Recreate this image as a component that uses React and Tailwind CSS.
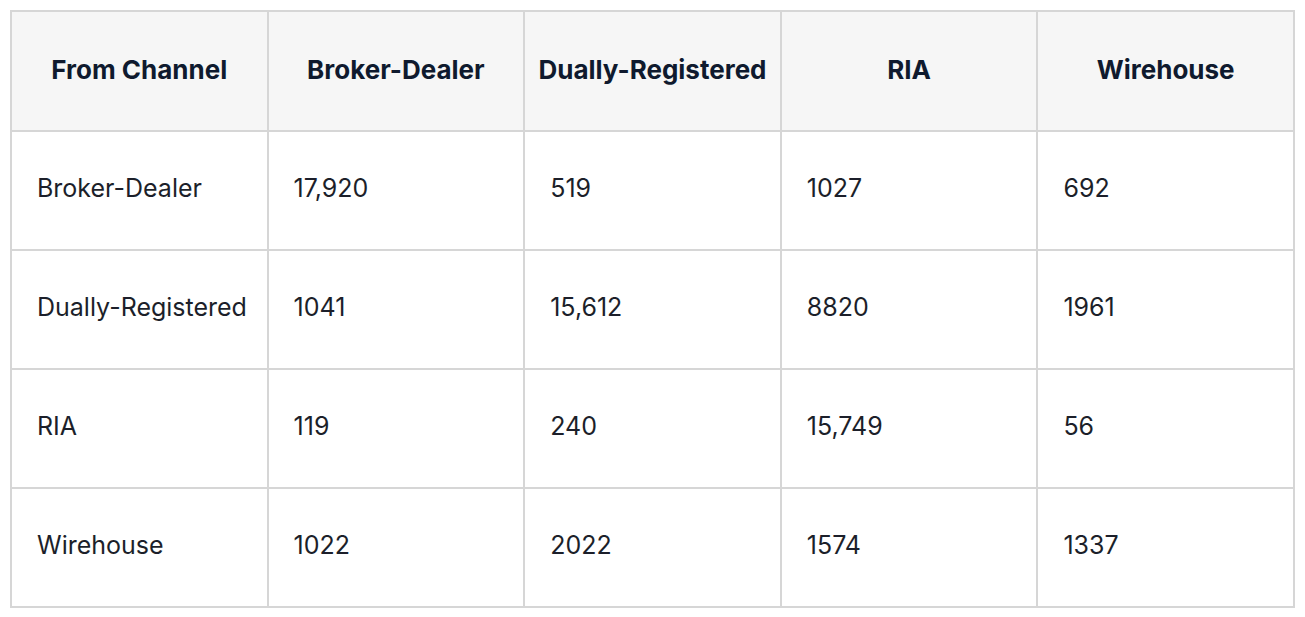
const headers = ['From Channel', 'Broker-Dealer', 'Dually-Registered', 'RIA', 'Wirehouse'];

const rows = [
  ['Broker-Dealer', '17,920', '519', '1027', '692'],
  ['Dually-Registered', '1041', '15,612', '8820', '1961'],
  ['RIA', '119', '240', '15,749', '56'],
  ['Wirehouse', '1022', '2022', '1574', '1337'],
];

export default function App() {
  return (
    <div className="bg-white p-[10px] font-['Inter',sans-serif]">
      <table className="w-[1285px] table-fixed border-collapse border-2 border-[#d6d6d6]">
        <thead>
          <tr className="h-[120px] bg-[#f6f6f6]">
            {headers.map((h) => (
              <th
                key={h}
                className="border-2 border-[#d6d6d6] pb-[4px] text-center text-[26px] font-bold text-[#0f1a2e]"
              >
                {h}
              </th>
            ))}
          </tr>
        </thead>
        <tbody>
          {rows.map((row) => (
            <tr key={row[0]} className="h-[119px]">
              {row.map((cell, i) => (
                <td
                  key={i}
                  className="border-2 border-[#d6d6d6] pl-[25px] pb-[3px] text-left text-[25px] text-[#1c1f2a]"
                >
                  {cell}
                </td>
              ))}
            </tr>
          ))}
        </tbody>
      </table>
    </div>
  );
}
